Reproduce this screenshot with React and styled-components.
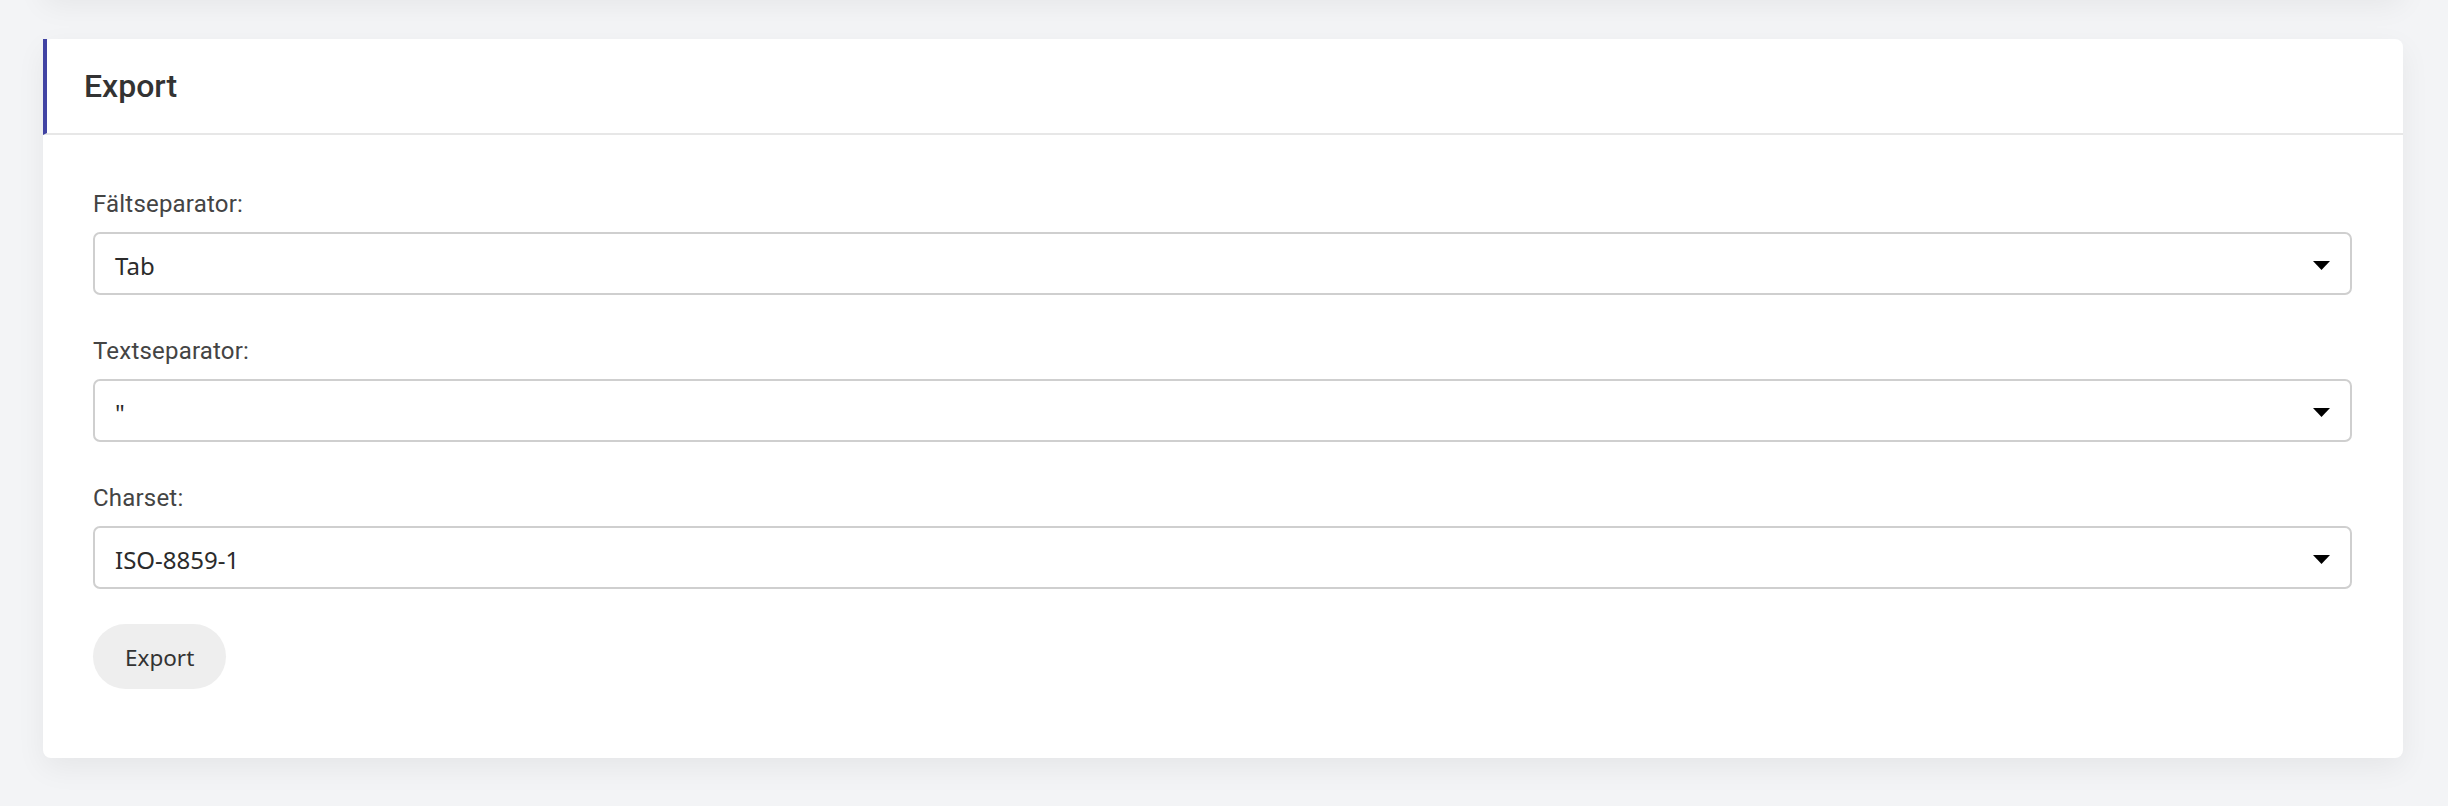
import React from "react";
import styled, { createGlobalStyle } from "styled-components";

const GlobalStyle = createGlobalStyle`
  html, body {
    margin: 0;
    padding: 0;
    background: #f3f4f6;
  }
  * { box-sizing: border-box; }
`;

const Page = styled.div`
  padding: 0 45px 48px 43px;
  display: flex;
  flex-direction: column;
  gap: 44px;
  overflow: hidden;
`;

const PrevCard = styled.div`
  height: 60px;
  margin-top: -65px;
  background: #ffffff;
  border-radius: 8px;
  box-shadow: 0 10px 30px rgba(0, 0, 0, 0.06);
`;

const Card = styled.section`
  background: #ffffff;
  border-radius: 8px;
  box-shadow: 0 10px 30px rgba(0, 0, 0, 0.06);
`;

const CardHeader = styled.header`
  height: 96px;
  display: flex;
  align-items: center;
  padding-left: 37px;
  border-left: 4px solid #4143a3;
  border-bottom: 2px solid #e7e7e7;
  border-radius: 0 8px 0 0;
`;

const Title = styled.h2`
  margin: 0;
  font-family: Roboto, "Noto Sans", sans-serif;
  font-weight: 500;
  font-size: 32px;
  color: #333333;
`;

const CardBody = styled.div`
  padding: 55px 51px 69px 50px;
  display: flex;
  flex-direction: column;
`;

const Field = styled.div`
  display: flex;
  flex-direction: column;
  gap: 14px;
  margin-bottom: 42px;
`;

const Label = styled.label`
  font-family: Roboto, "Noto Sans", sans-serif;
  font-size: 24px;
  letter-spacing: 0.2px;
  line-height: 28px;
  color: #444444;
`;

const SelectBox = styled.div`
  height: 63px;
  border: 2px solid #cfcfcf;
  border-radius: 7px;
  background: #ffffff;
  display: flex;
  align-items: center;
  justify-content: space-between;
  padding: 0 20px 0 20px;
`;

const SelectValue = styled.span`
  font-family: "Noto Sans", "Open Sans", sans-serif;
  font-size: 24px;
  color: #2b2b2b;
  padding-top: 3px;
`;

const Arrow = styled.svg`
  width: 17px;
  height: 9px;
  margin-top: 3px;
  flex-shrink: 0;
`;

const ButtonRow = styled.div`
  display: flex;
  margin-top: -7px;
`;

const Button = styled.button`
  height: 65px;
  padding: 2px 32px 0;
  border: none;
  border-radius: 33px;
  background: #eeeeee;
  font-family: "Noto Sans", "Open Sans", sans-serif;
  font-size: 22.5px;
  color: #333333;
  cursor: pointer;
`;

function Select({ value }) {
  return (
    <SelectBox role="combobox">
      <SelectValue>{value}</SelectValue>
      <Arrow viewBox="0 0 17 9">
        <polygon points="0,0 17,0 8.5,9" fill="#000" />
      </Arrow>
    </SelectBox>
  );
}

const fields = [
  { label: "Fältseparator:", value: "Tab" },
  { label: "Textseparator:", value: '"' },
  { label: "Charset:", value: "ISO-8859-1" },
];

export default function App() {
  return (
    <>
      <GlobalStyle />
      <Page>
        <PrevCard />
        <Card>
          <CardHeader>
            <Title>Export</Title>
          </CardHeader>
          <CardBody>
            {fields.map((f) => (
              <Field key={f.label}>
                <Label>{f.label}</Label>
                <Select value={f.value} />
              </Field>
            ))}
            <ButtonRow>
              <Button>Export</Button>
            </ButtonRow>
          </CardBody>
        </Card>
      </Page>
    </>
  );
}
